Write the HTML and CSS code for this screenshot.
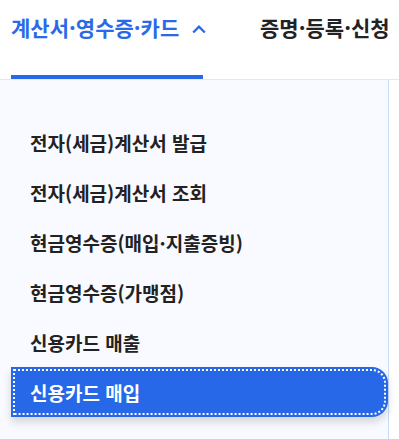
FILE: index.html
```html
<!DOCTYPE html>
<html lang="ko">
<head>
  <meta charset="UTF-8">
  <meta name="viewport" content="width=device-width, initial-scale=1.0">
  <title>계산서·영수증·카드</title>
  <link rel="stylesheet" href="styles.css">
</head>
<body>

  <div class="gnb">
    <div class="gnb-tabs">
      <a class="gnb-tab active" href="#">
        계산서·영수증·카드
        <svg class="caret" width="14" height="11" viewBox="0 0 14 11">
          <path d="M1.2 8.5 L7 2.7 L12.8 8.5" fill="none" stroke="currentColor" stroke-width="2.4"/>
        </svg>
      </a>
      <a class="gnb-tab" href="#">증명·등록·신청</a>
    </div>
  </div>

  <div class="sub-menu">
    <ul class="sub-list">
      <li><a href="#">전자(세금)계산서 발급</a></li>
      <li><a href="#">전자(세금)계산서 조회</a></li>
      <li><a href="#">현금영수증(매입·지출증빙)</a></li>
      <li><a href="#">현금영수증(가맹점)</a></li>
      <li><a href="#">신용카드 매출</a></li>
      <li class="on"><a href="#">신용카드 매입</a></li>
    </ul>
  </div>

</body>
</html>
```

FILE: styles.css
```css
body {
  margin: 0;
  font-family: "Noto Sans CJK KR", "Noto Sans", sans-serif;
  background: #fff;
  overflow: hidden;
}

a {
  text-decoration: none;
}

.gnb {
  height: 79px;
  border-bottom: 1px solid #e6e8ec;
}

.gnb-tabs {
  display: flex;
  height: 100%;
  padding-left: 11px;
  gap: 57px;
}

.gnb-tab {
  display: flex;
  align-items: flex-start;
  padding-top: 12px;
  font-size: 21px;
  font-weight: 700;
  color: #222;
  white-space: nowrap;
  box-sizing: border-box;
}

.gnb-tab.active {
  width: 192px;
  flex-shrink: 0;
  color: #2a6ae9;
  border-bottom: 4px solid #2668e8;
  border-radius: 3px 3px 0 0;
}

.caret {
  flex-shrink: 0;
  margin: 12px 0 0 13px;
}

.sub-menu {
  width: 388px;
  height: 322px;
  background: #f8faff;
  border-right: 1px solid #c8dbfb;
  padding-top: 37px;
}

.sub-list {
  list-style: none;
  margin: 0;
  padding: 0;
}

.sub-list li {
  height: 50px;
  display: flex;
}

.sub-list a {
  display: flex;
  align-items: center;
  flex: 1;
  margin-left: 11px;
  padding-left: 19px;
  font-size: 19px;
  font-weight: 700;
  color: #222;
}

.sub-list li.on a {
  background: #2668e8;
  color: #fff;
  border-radius: 0 16px 16px 0;
  outline: 2px dotted #fff;
  outline-offset: -4px;
  box-shadow: 0 5px 8px rgba(0, 0, 0, 0.15);
}
```
